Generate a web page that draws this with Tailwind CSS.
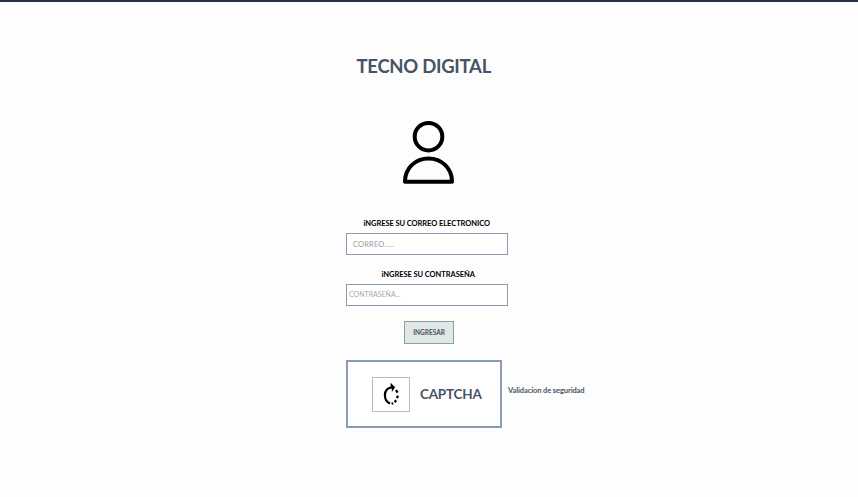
<!DOCTYPE html>
<html lang="es">
<head>
<meta charset="utf-8">
<title>Tecno Digital</title>
<script src="https://cdn.jsdelivr.net/npm/@tailwindcss/browser@4"></script>
</head>
<body class="h-[497px] overflow-hidden bg-[#fdfdfd] font-['Lato',sans-serif] font-bold text-[#465464]">
<header class="h-[2px] bg-[#233042]"></header>
<main class="ml-[346px] flex w-[260px] flex-col">
  <h1 class="mt-[52px] ml-[10.5px] h-6 whitespace-nowrap text-[18.5px] leading-6 tracking-[-0.28px]">TECNO DIGITAL</h1>
  <svg class="mt-[42px] ml-[56px] h-[66px] w-[54px]" viewBox="0 0 54 66" fill="none" stroke="#000" stroke-width="4" stroke-linejoin="round">
    <circle cx="26.5" cy="16.7" r="13.8"/>
    <path d="M3 61.8C3 48 13.5 38.4 26.5 38.4S50 48 50 61.8Z"/>
  </svg>
  <form class="flex flex-col">
    <label class="mt-[32px] ml-[17.5px] h-3 whitespace-nowrap text-[7.5px] leading-3 tracking-[-0.06px] text-black">iNGRESE SU CORREO ELECTRONICO</label>
    <input class="mt-[3px] h-[22px] w-[162px] border border-[#8b9bb2] bg-white pl-[6px] text-[7.5px] font-normal tracking-[0.15px] placeholder:text-[#999]" placeholder="CORREO.....">
    <label class="mt-[14px] ml-[35.5px] h-3 whitespace-nowrap text-[7.5px] leading-3 tracking-[-0.06px] text-black">iNGRESE SU CONTRASEÑA</label>
    <input class="mt-[3px] h-[22px] w-[162px] border border-[#8b9bb2] bg-white pb-[2px] pl-[2px] text-[7px] font-normal placeholder:text-[#aaa]" placeholder="CONTRASEÑA...">
    <button class="mt-[15px] ml-[58px] h-[23px] w-[50px] border border-[#8b9bb2] bg-[#dfe8e2] text-[6.5px]">INGRESAR</button>
  </form>
  <section class="mt-[16px] flex">
    <div class="flex h-[68px] w-[156px] shrink-0 items-center border-2 border-[#8b9bb2] bg-white pl-[24px]">
      <div class="flex h-[35px] w-[38px] shrink-0 items-center justify-center border border-[#b5bdc9]">
        <svg class="h-[24px] w-[18px]" viewBox="0 0 18 24" fill="none" stroke="#000" stroke-width="2.2">
          <path d="M10.5 5.4C5.8 5.2 2.9 8.8 2.9 13C2.9 17 5 20.2 8 21.4"/>
          <path d="M8.6 .7L13.2 5.3L9.8 10V6.3L8.6 5.5Z" fill="#000" stroke="none"/>
          <path d="M14 8L15.6 10.6M15.9 13.6L15.1 16.2M14.2 18.3L12.6 20.2M11.2 21.2L9.6 21.8"/>
        </svg>
      </div>
      <span class="ml-[10px] text-[13.5px] leading-5 tracking-[-0.22px]">CAPTCHA</span>
    </div>
    <p class="mt-[25px] ml-[6px] h-3 whitespace-nowrap text-[7.5px] leading-3 tracking-[-0.1px]">Validacion de seguridad</p>
  </section>
</main>
</body>
</html>
